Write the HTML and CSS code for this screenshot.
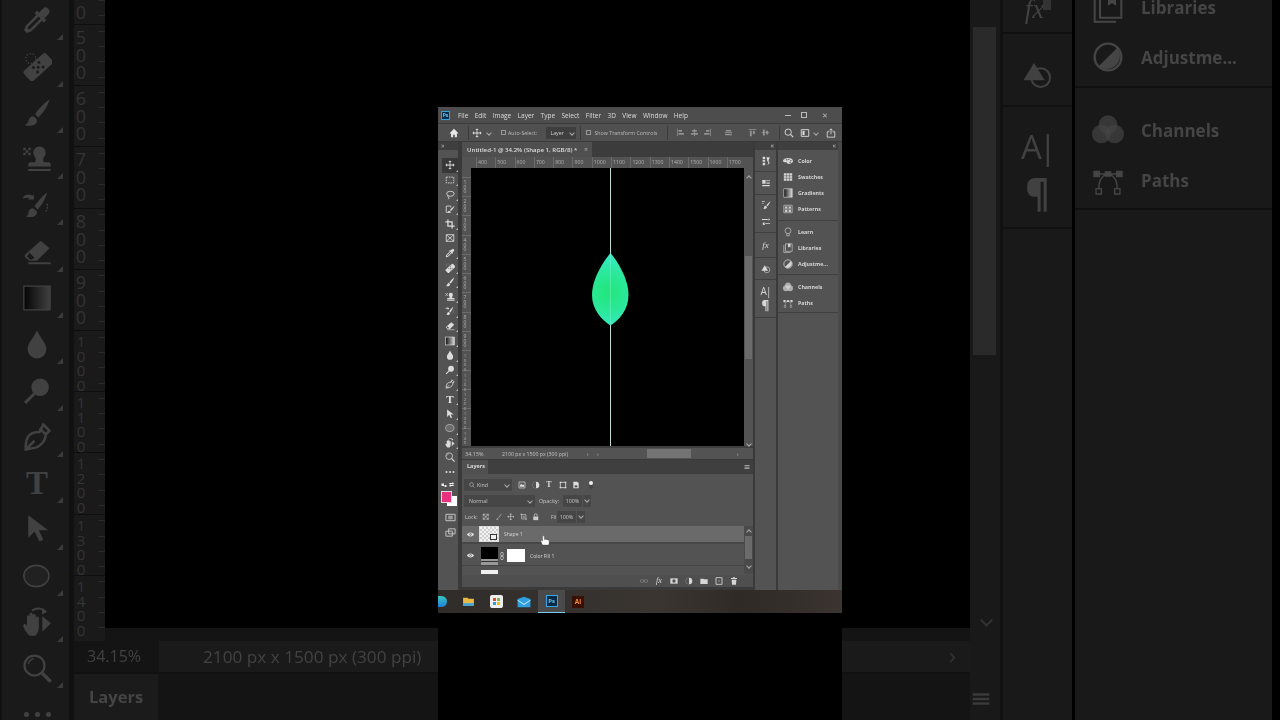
FILE: index.html
```html
<!DOCTYPE html>
<html lang="en">
<head>
<meta charset="utf-8">
<title>Photoshop</title>
<link rel="stylesheet" href="styles.css">
</head>
<body>
<svg class="sprite" aria-hidden="true">
  <defs>
    <linearGradient id="g-grad"><stop offset="0" stop-color="#111"/><stop offset="1" stop-color="#d8d8d8"/></linearGradient>
    <linearGradient id="g-grad-b"><stop offset="0" stop-color="#050505"/><stop offset="1" stop-color="#404040"/></linearGradient>
    <radialGradient id="g-leaf" gradientUnits="userSpaceOnUse" cx="137" cy="124" r="36"><stop offset="0" stop-color="#22e67a"/><stop offset=".55" stop-color="#2be89a"/><stop offset="1" stop-color="#35ebc4"/></radialGradient>
    <symbol id="i-move" viewBox="0 0 24 24"><path fill="currentColor" d="M12 1l4 4h-3v6h6V8l4 4-4 4v-3h-6v6h3l-4 4-4-4h3v-6H5v3l-4-4 4-4v3h6V5H8z"/></symbol>
    <symbol id="i-marquee" viewBox="0 0 24 24"><rect x="3" y="5" width="18" height="14" fill="none" stroke="currentColor" stroke-width="2" stroke-dasharray="4 2"/></symbol>
    <symbol id="i-lasso" viewBox="0 0 24 24"><ellipse cx="13" cy="9" rx="9" ry="6" fill="none" stroke="currentColor" stroke-width="2"/><path d="M8 14c-2 2-1 4 1 4s1 3-2 4" fill="none" stroke="currentColor" stroke-width="2"/></symbol>
    <symbol id="i-quick" viewBox="0 0 24 24"><path d="M3 5h11v3M3 5v15h11" fill="none" stroke="currentColor" stroke-width="2"/><path fill="currentColor" d="M23 5c-4 2-9 7-11 10l2 2c3-2 7-7 9-12zM10 16c-2 0-3 2-3 5 3 0 6-1 6-3z"/></symbol>
    <symbol id="i-crop" viewBox="0 0 24 24"><path d="M7 1v16h16M1 7h16v16" fill="none" stroke="currentColor" stroke-width="3"/></symbol>
    <symbol id="i-frame" viewBox="0 0 24 24"><path d="M3 4h18v16H3zM3 4l18 16M21 4L3 20" fill="none" stroke="currentColor" stroke-width="2"/></symbol>
    <symbol id="i-dropper" viewBox="0 0 24 24"><path fill="currentColor" d="M21 3a3 3 0 0 0-4.300 0l-3 3L12 4.500l-2 2L11.500 8l-8 8c-.8.800-1 1.500-1 2.500L1.500 20 4 22.500l1.500-1c1 0 1.700-.2 2.500-1l8-8 1.500 1.500 2-2-1.500-1.500 3-3A3 3 0 0 0 21 3zM6.800 18.800c-.5.500-1 .6-1.600.6l-.6-.6c0-.6.100-1.100.6-1.600l8-8 1.600 1.600z"/></symbol>
    <symbol id="i-heal" viewBox="0 0 24 24"><g transform="rotate(-42 13 13)"><rect x="1" y="7.500" width="24" height="11" rx="2" fill="currentColor"/><g fill="var(--ib)"><rect x="9" y="9.500" width="2" height="2"/><rect x="15" y="9.500" width="2" height="2"/><rect x="12" y="12" width="2" height="2"/><rect x="9" y="14.500" width="2" height="2"/><rect x="15" y="14.500" width="2" height="2"/></g></g><ellipse cx="7" cy="6" rx="4" ry="4" fill="none" stroke="currentColor" stroke-dasharray="1 1.500"/></symbol>
    <symbol id="i-brush" viewBox="0 0 24 24"><path fill="currentColor" d="M22 1C18 4 13 9 10.500 13l2.500 2.500C16.500 12.500 20.500 7 22 1zM9 14.500c-3 .5-3.500 2.500-4 4.500-.3 1.300-1.500 2.300-3 2.500 4 1.500 9.500.5 10-3 .2-1.500-1-3.200-3-4z"/></symbol>
    <symbol id="i-stamp" viewBox="0 0 24 24"><path fill="currentColor" d="M14 2a5 5 0 0 0-3.500 8.500c.7 1 .7 2.500 0 4H7a2 2 0 0 0-2 2V18h18v-1.500a2 2 0 0 0-2-2h-3.500c-.7-1.500-.7-3 0-4A5 5 0 0 0 14 2zM5 20h18v1.600H5zM1 3h2v2H1zM5 3h2v2H5zM3 5h2v2H3zM1 7h2v2H1zM5 7h2v2H5z"/></symbol>
    <symbol id="i-history" viewBox="0 0 24 24"><path fill="currentColor" d="M20 2c-4 3-8 8-10 11l2.500 2.500C15.500 12.500 19 7 20 2zM8.500 14.500C5.500 15 5.500 17 5 19c-.3 1.300-1 2-2 2.300 4 1 8.500 0 9-3 .2-1.500-1.500-3-3.500-3.800zM1 5.500C3 3.500 6 3 8 4.500l1.500-1v4h-5l1.500-1C4.500 6 3 6 1 7z"/><path d="M20 11a6 6 0 0 1-1 6" fill="none" stroke="currentColor" stroke-dasharray="1.500 1"/></symbol>
    <symbol id="i-eraser" viewBox="0 0 24 24"><path fill="currentColor" d="M15 3L3 13.500a2 2 0 0 0 0 3L6 19h6l10-10z"/><path fill="var(--ib)" d="M6 12.500l4 4-2 1.500H6.500l-2.500-2.500z"/><path d="M5 21h18" stroke="currentColor" stroke-width="1.500"/></symbol>
    <symbol id="i-gradient" viewBox="0 0 24 24"><rect x="1.500" y="2.500" width="21" height="19" fill="url(#g-grad)" stroke="currentColor" stroke-width="1.500"/></symbol>
    <symbol id="i-gradient-b" viewBox="0 0 24 24"><rect x="1.500" y="2.500" width="21" height="19" fill="url(#g-grad-b)" stroke="currentColor" stroke-width="1"/></symbol>
    <symbol id="i-drop" viewBox="0 0 24 24"><path fill="currentColor" d="M12 1C9 8 4.500 11 4.500 16a7.500 7.500 0 0 0 15 0C19.500 11 15 8 12 1z"/></symbol>
    <symbol id="i-dodge" viewBox="0 0 24 24"><circle cx="14.500" cy="9" r="7" fill="currentColor"/><path d="M10 14L2.500 21.500" stroke="currentColor" stroke-width="2.500"/></symbol>
    <symbol id="i-pen" viewBox="0 0 24 24"><path fill="none" stroke="currentColor" stroke-width="2" d="M17 2l5 5-3 3c0 5-4 9-8 10.500L3 22c-.5-3 .5-8 2-10.500 2-3 5-3.500 9-3.500zM14 5l5 5M3 22l7-7"/></symbol>
    <symbol id="i-arrow" viewBox="0 0 24 24"><path fill="currentColor" d="M5 1v18l5-5 4 8 3-1.500-3.500-7.500H21z"/></symbol>
    <symbol id="i-ellipse" viewBox="0 0 24 24"><ellipse cx="11.500" cy="12" rx="10" ry="8.500" fill="currentColor" fill-opacity=".18" stroke="currentColor" stroke-width="1.300"/></symbol>
    <symbol id="i-hand" viewBox="0 0 24 24"><path fill="currentColor" d="M6 23c-2-2-5-6-5-8s2-1.500 3 0V8c0-2 2-2 2 0V6c0-2 2.500-2 2.500 0v1c0-2 2.500-2 2.500 0v2c0-1.500 2.500-1.500 2.500 0v7c0 3-1 5.500-3 7z"/><path d="M8 3c4-3 9-2 11 1M17 9l5 4-5 5z" fill="none" stroke="currentColor" stroke-width="1.500"/><path d="M17 9l5 4-5 5zM16 1l4 3-4 2z" fill="currentColor"/></symbol>
    <symbol id="i-zoom" viewBox="0 0 24 24"><circle cx="10" cy="10" r="8" fill="none" stroke="currentColor" stroke-width="1.800"/><path d="M15.500 15.500L23 23" stroke="currentColor" stroke-width="2.800"/><path d="M5 9c.5-2.500 2-4 4.500-4.500" fill="none" stroke="currentColor"/></symbol>
    <symbol id="i-swap" viewBox="0 0 24 24"><path fill="currentColor" d="M2 2h10v10H2zM14 8h8v8h-8z"/></symbol>
    <symbol id="i-mask" viewBox="0 0 24 24"><path d="M2 5h20v14H2z" fill="none" stroke="currentColor" stroke-width="2"/><rect x="7" y="8" width="10" height="8" fill="currentColor" opacity=".6"/></symbol>
    <symbol id="i-screen" viewBox="0 0 24 24"><path d="M8 4h14v11H8zM2 9h14v11H2z" fill="var(--ib)" stroke="currentColor" stroke-width="2"/></symbol>
    <symbol id="i-home" viewBox="0 0 24 24"><path fill="currentColor" d="M12 2L1 13h4v9h5v-6h4v6h5v-9h4z"/></symbol>
    <symbol id="i-alignl" viewBox="0 0 24 24"><path fill="currentColor" d="M3 2h2v20H3zM7 5h9v5H7zM7 13h14v5H7z" opacity=".75"/></symbol>
    <symbol id="i-alignc" viewBox="0 0 24 24"><path fill="currentColor" d="M11 2h2v20h-2zM6 5h12v5H6zM3 13h18v5H3z" opacity=".75"/></symbol>
    <symbol id="i-alignr" viewBox="0 0 24 24"><path fill="currentColor" d="M19 2h2v20h-2zM8 5h9v5H8zM3 13h14v5H3z" opacity=".75"/></symbol>
    <symbol id="i-alignd" viewBox="0 0 24 24"><path fill="currentColor" d="M2 11h20v2H2zM5 5h14v4H5zM3 15h18v4H3z" opacity=".75"/></symbol>
    <symbol id="i-alignt" viewBox="0 0 24 24"><path fill="currentColor" d="M2 3h20v2H2zM5 7h5v15H5zM13 7h5v9h-5z" opacity=".75"/></symbol>
    <symbol id="i-alignm" viewBox="0 0 24 24"><path fill="currentColor" d="M2 11h20v2H2zM5 4h5v16H5zM14 7h5v10h-5z" opacity=".75"/></symbol>
    <symbol id="i-search" viewBox="0 0 24 24"><circle cx="10" cy="10" r="7.500" fill="none" stroke="currentColor" stroke-width="2.200"/><path d="M15.500 15.500L22 22" stroke="currentColor" stroke-width="2.500"/></symbol>
    <symbol id="i-view" viewBox="0 0 24 24"><path d="M3 4h18v16H3z" fill="none" stroke="currentColor" stroke-width="2.200"/><path d="M6 7h5v10H6z" fill="currentColor"/></symbol>
    <symbol id="i-share" viewBox="0 0 24 24"><path d="M8 9H3v13h18V9h-5" fill="none" stroke="currentColor" stroke-width="2"/><path d="M12 15V2M8 6l4-4 4 4" fill="none" stroke="currentColor" stroke-width="2"/></symbol>
    <symbol id="i-color" viewBox="0 0 24 24"><path fill="currentColor" d="M13 5c6 0 11 3 11 7s-5 7-11 7c-2 0-3-1-3-2s-2-2-4-2-6 0-6-3c0-4 7-7 13-7z"/><g fill="var(--ib)"><circle cx="9" cy="9" r="1.700"/><circle cx="14" cy="8" r="1.700"/><circle cx="19" cy="11" r="1.700"/><circle cx="17" cy="15" r="1.700"/></g></symbol>
    <symbol id="i-swatches" viewBox="0 0 24 24"><path fill="currentColor" d="M2 3h20v18H2z"/><path stroke="var(--ib)" stroke-width="1.200" d="M2 9h20M2 15h20M8.500 3v18M15.500 3v18"/></symbol>
    <symbol id="i-gradients" viewBox="0 0 24 24"><rect x="2" y="2" width="20" height="20" fill="url(#g-grad)" stroke="currentColor" stroke-width="1.500"/></symbol>
    <symbol id="i-patterns" viewBox="0 0 24 24"><path d="M2 3h20v18H2z" fill="none" stroke="currentColor" stroke-width="1.500"/><path d="M5 6h5v5H5zM14 6h5v5h-5zM5 14h5v5H5zM14 14h5v5h-5z" fill="currentColor"/><path d="M12 3v18M2 12h20" stroke="currentColor"/></symbol>
    <symbol id="i-learn" viewBox="0 0 24 24"><circle cx="12" cy="9" r="7" fill="none" stroke="currentColor" stroke-width="1.500"/><path d="M9 16v5h6v-5" fill="none" stroke="currentColor" stroke-width="1.500"/></symbol>
    <symbol id="i-lib" viewBox="0 0 24 24"><path d="M6 2h16v18H6zM2 5v18h16" fill="none" stroke="currentColor" stroke-width="1.500"/><path fill="currentColor" d="M12 2h6v9l-3-2-3 2z"/></symbol>
    <symbol id="i-adjust" viewBox="0 0 24 24"><circle cx="12" cy="12" r="10" fill="none" stroke="currentColor" stroke-width="1.800"/><path fill="currentColor" d="M19 5a10 10 0 0 1-14 14z"/></symbol>
    <symbol id="i-channels" viewBox="0 0 24 24"><g fill="currentColor" fill-opacity=".7"><circle cx="12" cy="8" r="7"/><circle cx="7" cy="15" r="7"/><circle cx="17" cy="15" r="7"/></g></symbol>
    <symbol id="i-paths" viewBox="0 0 24 24"><path d="M1 5h5v5H1zM9.500 5.500h5v4h-5zM18 5h5v5h-5z" fill="currentColor"/><path d="M6 7.500h12M10 8c-4 2-5 6-5 11M14 8c4 2 5 6 5 11" fill="none" stroke="currentColor"/><path d="M3 18.500h4v4H3zM17 18.500h4v4h-4z" fill="none" stroke="currentColor"/></symbol>
    <symbol id="i-glyph" viewBox="0 0 24 24"><path fill="currentColor" d="M4 2h6v5H4zM4 9h6v5H4zM4 16h6v6H4zM13 3h8l-3 9 3 5-6 5 3-6-3-4z"/></symbol>
    <symbol id="i-prop" viewBox="0 0 24 24"><path fill="currentColor" d="M3 5h8v9H3zM13 5h3v3h-3zM18 5h3v3h-3zM13 11h8v3h-8zM3 17h18v2.500H3z"/></symbol>
    <symbol id="i-bset" viewBox="0 0 24 24"><path fill="currentColor" d="M23 3c-4 3-8 7-10 10l2.500 2C18 12 21 8 23 3zM11 14c-3 0-3.500 3-4 5-.3 1-1 1.500-2 2 4 1 8.500 0 9-3 .2-1.500-1-3-3-4zM2 3h7v1.500H2zM2 7h5v1.500H2z"/></symbol>
    <symbol id="i-slide" viewBox="0 0 24 24"><path fill="currentColor" d="M2 5h14v2H2zM18 3l4 3-4 3zM8 15h14v2H8zM4 16a3 3 0 1 0 6 0 3 3 0 0 0-6 0z"/></symbol>
    <symbol id="i-hist" viewBox="0 0 24 24"><path fill="currentColor" d="M9 3l8 13H1z"/><circle cx="14" cy="14" r="7" fill="none" stroke="currentColor" stroke-width="1.500"/></symbol>
    <symbol id="i-eye" viewBox="0 0 24 24"><path fill="currentColor" d="M12 5C6 5 2 9 0 12c2 3 6 7 12 7s10-4 12-7c-2-3-6-7-12-7z"/><circle cx="12" cy="12" r="4" fill="var(--ib)"/><circle cx="12" cy="12" r="2" fill="currentColor"/></symbol>
    <symbol id="i-pixel" viewBox="0 0 24 24"><path d="M3 3h18v18H3z" fill="none" stroke="currentColor" stroke-width="2"/><path d="M6 13l4-5 4 4 2-2 3 4v3H6z" fill="currentColor"/></symbol>
    <symbol id="i-half" viewBox="0 0 24 24"><circle cx="12" cy="12" r="10" fill="currentColor"/><path fill="var(--ib)" d="M12 2v20a10 10 0 0 1 0-20z"/></symbol>
    <symbol id="i-shape" viewBox="0 0 24 24"><path d="M4 4h16v16H4z" fill="none" stroke="currentColor" stroke-width="2.500"/><path d="M2 2h4v4H2zM18 2h4v4h-4zM2 18h4v4H2zM18 18h4v4h-4z" fill="currentColor"/></symbol>
    <symbol id="i-smart" viewBox="0 0 24 24"><path fill="currentColor" d="M4 2h12l4 4v16H4z"/><path fill="var(--ib)" d="M8 13h8v6H8z"/></symbol>
    <symbol id="i-lockt" viewBox="0 0 24 24"><path d="M3 3h18v18H3z" fill="none" stroke="currentColor"/><path fill="currentColor" opacity=".7" d="M3 3h6v6H3zM15 3h6v6h-6zM9 9h6v6H9zM3 15h6v6H3zM15 15h6v6h-6z"/></symbol>
    <symbol id="i-lockb" viewBox="0 0 24 24"><path fill="currentColor" opacity=".6" d="M22 1C18 4 13 10 10 14l2 2c3-3 8-9 10-15zM8 15c-3 1-2 5-5 7 4 1 8 0 8-3 0-1-1-3-3-4z"/></symbol>
    <symbol id="i-art" viewBox="0 0 24 24"><path d="M5 1v18h18M1 5h18v18" fill="none" stroke="currentColor" stroke-width="2"/><path d="M8 8h8v8H8z" fill="currentColor" opacity=".4"/></symbol>
    <symbol id="i-lock" viewBox="0 0 24 24"><path fill="currentColor" d="M4 11h16v12H4z"/><path d="M7.500 11V7a4.500 4.500 0 0 1 9 0v4" fill="none" stroke="currentColor" stroke-width="2.500"/></symbol>
    <symbol id="i-chain" viewBox="0 0 24 24"><rect x="1" y="8" width="11" height="8" rx="4" fill="none" stroke="currentColor" stroke-width="2"/><rect x="12" y="8" width="11" height="8" rx="4" fill="none" stroke="currentColor" stroke-width="2"/></symbol>
    <symbol id="i-vchain" viewBox="0 0 12 24"><rect x="2" y="1" width="8" height="11" rx="4" fill="none" stroke="currentColor" stroke-width="2"/><rect x="2" y="12" width="8" height="11" rx="4" fill="none" stroke="currentColor" stroke-width="2"/></symbol>
    <symbol id="i-lmask" viewBox="0 0 24 24"><path fill="currentColor" d="M1 4h22v16H1z"/><circle cx="12" cy="12" r="5" fill="var(--ib)"/></symbol>
    <symbol id="i-folder" viewBox="0 0 24 24"><path fill="currentColor" d="M1 5h9l2 2h11v14H1z"/></symbol>
    <symbol id="i-new" viewBox="0 0 24 24"><path d="M3 2h18v20H3z" fill="none" stroke="currentColor" stroke-width="2.500"/><path d="M9 11h6v2H9z" fill="currentColor"/></symbol>
    <symbol id="i-trash" viewBox="0 0 24 24"><path fill="currentColor" d="M9 1h6v2h6v3H3V3h6zM5 8h14l-1 15H6z"/></symbol>
    <symbol id="i-menu" viewBox="0 0 24 24"><path fill="currentColor" d="M2 5h20v3H2zM2 10.500h20v3H2zM2 16h20v3H2z"/></symbol>
  </defs>
</svg>

<main class="stage">
  <section class="side side-left">
    <div class="bt">
      <div class="bt-item"><svg class="bi"><use href="#i-dropper"/></svg></div>
      <div class="bt-item"><svg class="bi"><use href="#i-heal"/></svg></div>
      <div class="bt-item"><svg class="bi"><use href="#i-brush"/></svg></div>
      <div class="bt-item"><svg class="bi"><use href="#i-stamp"/></svg></div>
      <div class="bt-item"><svg class="bi"><use href="#i-history"/></svg></div>
      <div class="bt-item"><svg class="bi"><use href="#i-eraser"/></svg></div>
      <div class="bt-item"><svg class="bi"><use href="#i-gradient-b"/></svg></div>
      <div class="bt-item"><svg class="bi"><use href="#i-drop"/></svg></div>
      <div class="bt-item"><svg class="bi"><use href="#i-dodge"/></svg></div>
      <div class="bt-item"><svg class="bi"><use href="#i-pen"/></svg></div>
      <div class="bt-item"><span class="bt-t">T</span></div>
      <div class="bt-item"><svg class="bi"><use href="#i-arrow"/></svg></div>
      <div class="bt-item"><svg class="bi"><use href="#i-ellipse"/></svg></div>
      <div class="bt-item"><svg class="bi"><use href="#i-hand"/></svg></div>
      <div class="bt-item"><svg class="bi"><use href="#i-zoom"/></svg></div>
      <div class="bt-item bt-plain"><span class="bt-dots"></span></div>
    </div>
    <div class="bm">
      <div class="bm-row">
        <div class="bv">
          <div class="bv-s bv-first"><span>0</span></div>
          <div class="bv-s"><span>500</span></div>
          <div class="bv-s"><span>600</span></div>
          <div class="bv-s"><span>700</span></div>
          <div class="bv-s"><span>800</span></div>
          <div class="bv-s"><span>900</span></div>
          <div class="bv-s bv-4"><span>1000</span></div>
          <div class="bv-s bv-4"><span>1100</span></div>
          <div class="bv-s bv-4"><span>1200</span></div>
          <div class="bv-s bv-4"><span>1300</span></div>
          <div class="bv-s bv-4"><span>1400</span></div>
        </div>
        <div class="bc"><div class="bc-black"></div><div class="bc-strip"></div></div>
      </div>
      <div class="b-status">
        <span class="bs-zoom">34.15%</span>
        <span class="bs-size">2100 px x 1500 px (300 ppi)</span>
      </div>
      <div class="b-layers"><span class="bl-tab">Layers</span></div>
    </div>
  </section>

  <section class="center">
    <div class="win">
      <header class="title">
        <span class="ps-logo">Ps</span>
        <nav class="menu"><span>File</span><span>Edit</span><span>Image</span><span>Layer</span><span>Type</span><span>Select</span><span>Filter</span><span>3D</span><span>View</span><span>Window</span><span>Help</span></nav>
        <div class="wctl"><span class="wc-min"></span><span class="wc-max"></span><span class="wc-x">✕</span></div>
      </header>
      <div class="options">
        <svg class="o-home"><use href="#i-home"/></svg>
        <i class="o-sep o-sep1"></i>
        <svg class="o-move"><use href="#i-move"/></svg>
        <span class="chev o-ch"></span>
        <span class="cbox o-cb1"></span><span class="o-lab">Auto-Select:</span>
        <span class="o-sel">Layer<span class="chev"></span></span>
        <i class="o-sep o-sep2"></i>
        <span class="cbox o-cb2"></span><span class="o-lab o-lab2">Show Transform Controls</span>
        <i class="o-sep o-sep3"></i>
        <div class="o-aligns">
          <svg><use href="#i-alignl"/></svg><svg><use href="#i-alignc"/></svg><svg><use href="#i-alignr"/></svg><svg class="o-gap"><use href="#i-alignd"/></svg><svg class="o-gap2"><use href="#i-alignt"/></svg><svg><use href="#i-alignm"/></svg>
        </div>
        <i class="o-sep o-sep4"></i>
        <svg class="o-ic o-search"><use href="#i-search"/></svg>
        <svg class="o-ic o-view"><use href="#i-view"/></svg>
        <span class="chev o-ch2"></span>
        <svg class="o-ic o-share"><use href="#i-share"/></svg>
      </div>
      <div class="wbody">
        <aside class="tools">
          <div class="t-head">»</div>
          <div class="t-list">
            <div class="t t-on"><svg><use href="#i-move"/></svg></div>
            <div class="t"><svg><use href="#i-marquee"/></svg></div>
            <div class="t"><svg><use href="#i-lasso"/></svg></div>
            <div class="t"><svg><use href="#i-quick"/></svg></div>
            <div class="t"><svg><use href="#i-crop"/></svg></div>
            <div class="t t-np"><svg><use href="#i-frame"/></svg></div>
            <div class="t"><svg><use href="#i-dropper"/></svg></div>
            <div class="t"><svg><use href="#i-heal"/></svg></div>
            <div class="t"><svg><use href="#i-brush"/></svg></div>
            <div class="t"><svg><use href="#i-stamp"/></svg></div>
            <div class="t"><svg><use href="#i-history"/></svg></div>
            <div class="t"><svg><use href="#i-eraser"/></svg></div>
            <div class="t"><svg><use href="#i-gradient"/></svg></div>
            <div class="t"><svg><use href="#i-drop"/></svg></div>
            <div class="t"><svg><use href="#i-dodge"/></svg></div>
            <div class="t"><svg><use href="#i-pen"/></svg></div>
            <div class="t"><span class="t-t">T</span></div>
            <div class="t"><svg><use href="#i-arrow"/></svg></div>
            <div class="t"><svg><use href="#i-ellipse"/></svg></div>
            <div class="t"><svg><use href="#i-hand"/></svg></div>
            <div class="t t-np"><svg><use href="#i-zoom"/></svg></div>
            <div class="t t-np"><span class="t-dots"></span></div>
          </div>
          <div class="t-colors">
            <svg class="tc-mini"><use href="#i-swap"/></svg>
            <span class="tc-arrows">⇄</span>
            <span class="tc-bg"></span>
            <span class="tc-fg"></span>
          </div>
          <svg class="t-bottom"><use href="#i-mask"/></svg>
          <svg class="t-bottom"><use href="#i-screen"/></svg>
        </aside>

        <div class="doc">
          <div class="tabs"><div class="tab"><span>Untitled-1 @ 34.2% (Shape 1, RGB/8) *</span><b>×</b></div></div>
          <div class="hr">
            <span class="hr-lead"></span>
            <span>400</span><span>500</span><span>600</span><span>700</span><span>800</span><span>900</span><span>1000</span><span>1100</span><span>1200</span><span>1300</span><span>1400</span><span>1500</span><span>1600</span><span>1700</span>
          </div>
          <div class="cv-row">
            <div class="vr">
              <div class="vr-lead"></div>
              <div class="vr-s"><span>100</span></div>
              <div class="vr-s"><span>200</span></div>
              <div class="vr-s"><span>300</span></div>
              <div class="vr-s"><span>400</span></div>
              <div class="vr-s"><span>500</span></div>
              <div class="vr-s"><span>600</span></div>
              <div class="vr-s"><span>700</span></div>
              <div class="vr-s"><span>800</span></div>
              <div class="vr-s"><span>900</span></div>
              <div class="vr-s vr-4"><span>1000</span></div>
              <div class="vr-s vr-4"><span>1100</span></div>
              <div class="vr-s vr-4"><span>1200</span></div>
              <div class="vr-s vr-4"><span>1300</span></div>
              <div class="vr-s vr-4"><span>1400</span></div>
            </div>
            <svg class="canvas" viewBox="0 0 273 278">
              <path d="M139.500 0V278" stroke="#bcd9d3" stroke-width="1"/>
              <path fill="url(#g-leaf)" d="M139.500 85C132 94 121 111 121 127C121 142 131 152 139.500 157.500C148 152 157.500 142 157.500 127C157.500 111 147 94 139.500 85Z"/>
              <path d="M139.500 85V157" stroke="#7ff0d0" stroke-width=".7" opacity=".6"/>
            </svg>
            <div class="vs"><span class="chev chev-up"></span><span class="vs-thumb"></span><span class="chev"></span></div>
          </div>
          <div class="cv-edge"></div>
          <div class="status">
            <span class="st-zoom">34.15%</span>
            <span class="st-size">2100 px x 1500 px (300 ppi)</span>
            <span class="st-a">›</span><span class="st-b">‹</span>
            <span class="st-thumb"></span>
            <span class="st-c">›</span>
          </div>
          <div class="layers">
            <div class="l-head"><span class="l-tab">Layers</span><svg class="l-menu"><use href="#i-menu"/></svg></div>
            <div class="l-row l-r1">
              <span class="l-sel l-kind"><svg class="l-mag"><use href="#i-search"/></svg>Kind<span class="chev"></span></span>
              <svg class="l-f"><use href="#i-pixel"/></svg><svg class="l-f"><use href="#i-half"/></svg><span class="l-ft">T</span><svg class="l-f"><use href="#i-shape"/></svg><svg class="l-f"><use href="#i-smart"/></svg>
              <span class="l-dot"></span>
            </div>
            <div class="l-row l-r2">
              <span class="l-sel l-blend">Normal<span class="chev"></span></span>
              <span class="l-lab l-oplab">Opacity:</span><span class="l-val">100%</span><span class="l-drop"><span class="chev"></span></span>
            </div>
            <div class="l-row l-r3">
              <span class="l-lab">Lock:</span>
              <div class="l-locks"><svg><use href="#i-lockt"/></svg><svg><use href="#i-lockb"/></svg><svg><use href="#i-move"/></svg><svg><use href="#i-art"/></svg><svg><use href="#i-lock"/></svg></div>
              <span class="l-lab l-filllab">Fill:</span><span class="l-val">100%</span><span class="l-drop"><span class="chev"></span></span>
            </div>
            <div class="l-list">
              <div class="l-items">
                <div class="lay lay-on">
                  <svg class="eye"><use href="#i-eye"/></svg>
                  <span class="th-shape"><span class="th-smart"></span></span>
                  <span class="lay-name lay-n1">Shape 1</span>
                </div>
                <div class="lay lay-2">
                  <svg class="eye"><use href="#i-eye"/></svg>
                  <span class="th-fill"></span>
                  <svg class="lay-link"><use href="#i-vchain"/></svg>
                  <span class="th-mask"></span>
                  <span class="lay-name">Color Fill 1</span>
                </div>
                <div class="lay-3"><span class="th-partial"></span></div>
              </div>
              <div class="l-scroll"><span class="chev chev-up"></span><span class="l-thumb"></span><span class="chev"></span></div>
            </div>
            <div class="l-foot">
              <svg class="lf-link"><use href="#i-chain"/></svg>
              <span class="lf-fx">fx</span>
              <svg><use href="#i-lmask"/></svg>
              <svg><use href="#i-half"/></svg>
              <svg><use href="#i-folder"/></svg>
              <svg><use href="#i-new"/></svg>
              <svg><use href="#i-trash"/></svg>
            </div>
            <svg class="cursor" viewBox="0 0 24 24"><path fill="#fff" stroke="#333" stroke-width=".9" d="M6 23L2 14c-.5-2 2-3 4-1V3c0-3 4.500-3 4.500 0v7c1-1.500 3-1.500 4 0 1-1 3-1 4 1 1-1 3.500 0 3.500 2v5c0 2-1 4-2 5z"/></svg>
          </div>
        </div>

        <div class="dock1">
          <div class="d-bar">«</div>
          <div class="d1-g d1-a1"><svg><use href="#i-glyph"/></svg></div>
          <div class="d1-g d1-a2"><svg><use href="#i-prop"/></svg></div>
          <div class="d1-g d1-two"><svg><use href="#i-bset"/></svg><svg><use href="#i-slide"/></svg></div>
          <div class="d1-g d1-fx"><span>fx</span></div>
          <div class="d1-g d1-hist"><svg><use href="#i-hist"/></svg></div>
          <div class="d1-g d1-txt"><span class="d1-a">A|</span><span class="d1-p">¶</span></div>
        </div>
        <div class="dock2">
          <div class="d-bar">«</div>
          <div class="d2-g d2-g1">
            <div class="d2-i"><svg><use href="#i-color"/></svg><span>Color</span></div>
            <div class="d2-i"><svg><use href="#i-swatches"/></svg><span>Swatches</span></div>
            <div class="d2-i"><svg><use href="#i-gradients"/></svg><span>Gradients</span></div>
            <div class="d2-i"><svg><use href="#i-patterns"/></svg><span>Patterns</span></div>
          </div>
          <div class="d2-g d2-g2">
            <div class="d2-i"><svg><use href="#i-learn"/></svg><span>Learn</span></div>
            <div class="d2-i"><svg><use href="#i-lib"/></svg><span>Libraries</span></div>
            <div class="d2-i"><svg><use href="#i-adjust"/></svg><span>Adjustme...</span></div>
          </div>
          <div class="d2-g d2-g3">
            <div class="d2-i"><svg><use href="#i-channels"/></svg><span>Channels</span></div>
            <div class="d2-i"><svg><use href="#i-paths"/></svg><span>Paths</span></div>
          </div>
        </div>
      </div>
      <footer class="taskbar">
        <span class="tb-edge"></span>
        <svg class="tb-ic tb-folder" viewBox="0 0 24 24"><path fill="#e8b93e" d="M2 5h8l2 2h10v13H2z"/><path fill="#3fa5dc" d="M2 15h20v5H2z"/></svg>
        <span class="tb-ic tb-store"><i></i><i></i><i></i><i></i></span>
        <svg class="tb-ic tb-mail" viewBox="0 0 24 24"><path fill="#2f9fe0" d="M1 7l11-4 11 4v14H1z"/><path fill="#bfe6fa" d="M1 8l11 7 11-7v2l-11 7L1 10z"/></svg>
        <span class="tb-ps"><span>Ps</span></span>
        <span class="tb-ai">Ai</span>
      </footer>
    </div>
  </section>

  <section class="side side-right">
    <div class="rc">
      <div class="rc-black"></div>
      <div class="bc-strip"></div>
      <div class="r-status"><span class="chev-big">›</span></div>
      <div class="r-layers"></div>
    </div>
    <div class="rs">
      <span class="rs-thumb"></span>
      <span class="rs-arrow"></span>
      <svg class="rs-menu"><use href="#i-menu"/></svg>
    </div>
    <div class="rd1">
      <div class="rd1-g rd1-fx"><span class="fx-big">fx</span></div>
      <div class="rd1-g rd1-hist"><svg><use href="#i-hist"/></svg></div>
      <div class="rd1-g rd1-txt"><span class="r-a">A|</span><span class="r-p">¶</span></div>
    </div>
    <div class="rd2">
      <div class="rd2-g rd2-a">
        <div class="rd2-i"><svg><use href="#i-lib"/></svg><span>Libraries</span></div>
        <div class="rd2-i"><svg><use href="#i-adjust"/></svg><span>Adjustme...</span></div>
      </div>
      <div class="rd2-g rd2-b">
        <div class="rd2-i"><svg><use href="#i-channels"/></svg><span>Channels</span></div>
        <div class="rd2-i"><svg><use href="#i-paths"/></svg><span>Paths</span></div>
      </div>
    </div>
  </section>
</main>
</body>
</html>
```

FILE: styles.css
```css
* { box-sizing: border-box; }
html, body { margin: 0; height: 100%; background: #000; overflow: hidden; }
body { font-family: "Open Sans", "Liberation Sans", sans-serif; }
svg { display: block; }
.sprite { position: absolute; width: 0; height: 0; }
.stage { display: flex; width: 1280px; height: 720px; overflow: hidden; }
.side { width: 438px; height: 720px; display: flex; overflow: hidden; filter: blur(.7px); --ib: #191919; }
.center { width: 404px; height: 720px; }

/* large dim background, left */
.bt { width: 74px; padding: 0 0 0 3px; margin-top: -3px; border-left: 2px solid #111; background: #1a1a1a; border-right: 5px solid #111; color: #414141; flex: none; }
.bt-item { height: 46.300px; display: flex; align-items: center; justify-content: center; position: relative; }
.bt-item::after { content: ""; position: absolute; right: 6px; bottom: 3px; border-left: 6px solid transparent; border-bottom: 6px solid #3a3a3a; }
.bt-plain::after { display: none; }
.bi { width: 30px; height: 30px; }
.bt-t { font: 700 33px/1 "Liberation Serif", serif; color: #414141; }
.bt-dots { width: 5px; height: 5px; border-radius: 50%; background: #414141; box-shadow: -11px 0 #414141, 11px 0 #414141; }
.bm { flex: 1; display: flex; flex-direction: column; min-width: 0; }
.bm-row { height: 641px; display: flex; }
.bv { width: 31px; background: #1a1a1a repeating-linear-gradient(#2a2a2a 0 1px, transparent 1px 15.300px) right top / 7px 100% no-repeat; overflow: hidden; color: #343434; flex: none; }
.bv-s { height: 61.200px; border-top: 1px solid #0e0e0e; font-size: 18px; line-height: 14px; letter-spacing: -6.500px; }
.bv-first { height: 24px; border: 0; display: flex; align-items: flex-start; }
.bv-s span { display: block; writing-mode: vertical-rl; text-orientation: upright; }
.bv-4 { font-size: 15px; letter-spacing: -5.400px; }
.bc { flex: 1; display: flex; flex-direction: column; }
.bc-black { flex: 1; background: #000; }
.bc-strip { height: 13px; background: #141414; flex: none; }
.b-status { height: 33px; display: flex; align-items: center; background: #1a1a1a; border-bottom: 2px solid #111; color: #424242; }
.bs-zoom { width: 85px; height: 31px; padding-left: 13px; line-height: 30px; font-size: 16px; background: #141414; flex: none; }
.bs-size { margin-left: 44px; font-size: 17.200px; white-space: nowrap; }
.b-layers { flex: 1; background: #141414; display: flex; }
.bl-tab { width: 84px; background: #1b1b1b; color: #454545; font-weight: 700; font-size: 16.500px; line-height: 46px; padding-left: 15px; }

/* large dim background, right */
.rc { width: 128px; display: flex; flex-direction: column; flex: none; }
.rc-black { flex: 1; background: #000; }
.r-status { height: 33px; flex: none; background: #1a1a1a; border-bottom: 2px solid #111; color: #333; display: flex; justify-content: flex-end; padding-right: 14px; }
.chev-big { font-size: 24px; line-height: 28px; }
.r-layers { height: 46px; flex: none; background: #141414; }
.rs { width: 33px; flex: none; background: #191919; position: relative; border-right: 3px solid #111; display: flex; flex-direction: column; align-items: center; }
.rs-thumb { width: 23px; height: 328px; margin: 27px 0 0 -1px; background: #2a2a2a; }
.rs-arrow { width: 9px; height: 9px; margin: 261px 0 0 3px; border: solid #333; border-width: 0 2px 2px 0; transform: rotate(45deg); }
.rs-menu { width: 20px; height: 20px; margin: 64px 0 0 -9px; color: #3a3a3a; }
.rd1 { width: 69px; flex: none; background: #191919; color: #414141; }
.rd1-g { border-bottom: 2px solid #101010; display: flex; flex-direction: column; align-items: center; }
.rd1-fx { height: 34px; justify-content: flex-end; padding: 0 6px 9px 0; position: relative; }
.rd1-fx::after { content: ""; position: absolute; left: 40px; top: 0; width: 8px; height: 10px; background: #333; }
.rd1-hist { height: 73px; justify-content: center; padding-top: 10px; }
.rd1-hist svg { width: 32px; height: 32px; }
.rd1-txt { height: 122px; padding-top: 20px; }
.fx-big { font: italic 27px/1 "Liberation Serif", serif; color: #414141; }
.r-a { font-size: 33px; line-height: 40px; letter-spacing: -3px; }
.r-p { font-size: 38px; line-height: 50px; font-weight: 700; }
.rd2 { width: 197px; margin-left: 3px; flex: none; background: #191919; }
.rd2-g { border-bottom: 2px solid #101010; }
.rd2-a { margin-top: -18px; height: 106px; }
.rd2-b { height: 122px; padding-top: 17px; }
.rd2-i { height: 50px; display: flex; align-items: center; color: #454545; font-weight: 700; font-size: 17px; padding-left: 15px; gap: 15px; }
.rd2-i svg { width: 36px; height: 32px; flex: none; }

/* sharp window */
.win { width: 404px; height: 506px; margin-top: 107px; display: flex; flex-direction: column; background: #3a3a3a; color: #d0d0d0; font-size: 6px; --ib: #535353; filter: blur(.3px); }
.title { height: 16px; margin-bottom: 1px; display: flex; align-items: center; background: #4d4d4d; flex: none; position: relative; }
.ps-logo { width: 9px; height: 9px; margin-left: 3px; background: #0b2a45; border: 1px solid #2fa3e6; color: #6cc5f5; font-size: 5px; line-height: 7px; font-weight: 700; text-align: center; flex: none; }
.menu { display: flex; margin-left: 8px; font-size: 6.500px; color: #ddd; gap: 6.400px; }
.wctl { display: flex; align-items: center; margin-left: auto; margin-right: 14px; gap: 10px; color: #bbb; }
.wc-min { width: 6px; height: 1px; background: #bbb; }
.wc-max { width: 6px; height: 6px; border: 1px solid #bbb; }
.wc-x { font-size: 7px; margin-left: 5px; }

.options { height: 17px; margin-bottom: 1px; display: flex; align-items: center; background: #505050; flex: none; color: #ccc; }
.o-home { width: 10px; height: 10px; margin-left: 11px; color: #e8e8e8; flex: none; }
.o-sep { width: 1px; height: 14px; background: #3c3c3c; flex: none; }
.o-sep1 { margin-left: 9px; }
.o-move { width: 10px; height: 10px; margin-left: 3px; color: #ddd; flex: none; }
.chev { display: inline-block; width: 4px; height: 4px; border: solid #aaa; border-width: 0 1px 1px 0; transform: rotate(45deg); flex: none; }
.chev-up { transform: rotate(225deg); }
.o-ch { margin-left: 5px; }
.cbox { width: 5px; height: 5px; border: 1px solid #999; flex: none; }
.o-cb1 { margin-left: 10px; }
.o-lab { margin-left: 2px; font-size: 5.300px; color: #bbb; white-space: nowrap; flex: none; }
.o-sel { width: 30px; height: 12px; margin-left: 9px; background: #3e3e3e; display: flex; align-items: center; padding-left: 4px; font-size: 5.300px; gap: 6px; flex: none; }
.o-sep2 { margin-left: 4px; }
.o-cb2 { margin-left: 5px; }
.o-lab2 { width: 72px; margin-left: 3px; }
.o-sep3 { margin-left: 1px; }
.o-aligns { display: flex; margin-left: 8px; gap: 4.400px; color: #aaa; flex: none; }
.o-aligns svg { width: 9px; height: 9px; }
.o-aligns .o-gap { margin-left: 7px; }
.o-aligns .o-gap2 { margin-left: 11px; }
.o-sep4 { margin-left: 9px; }
.o-ic { width: 10px; height: 10px; color: #ddd; flex: none; }
.o-search { margin-left: 4px; }
.o-view { margin-left: 6px; }
.o-ch2 { margin-left: 4px; }
.o-share { margin-left: 8px; }

.wbody { height: 448px; display: flex; flex: none; background: #3a3a3a; }
.tools { width: 20px; background: #535353; flex: none; display: flex; flex-direction: column; align-items: center; margin-right: 4px; color: #dcdcdc; }
.t-head { width: 100%; height: 8px; background: #3f3f3f; font-size: 7px; line-height: 7px; color: #bbb; padding-left: 3px; }
.t-list { width: 100%; margin-top: 8px; }
.t { height: 14.620px; display: flex; align-items: center; justify-content: center; padding-left: 4px; position: relative; }
.t svg { width: 10px; height: 10px; }
.t::after { content: ""; position: absolute; right: 0; bottom: 1px; border-left: 2px solid transparent; border-bottom: 2px solid #bbb; }
.t-np::after { display: none; }
.t-on { background: #383838; margin: 0 0 0 4px; padding-left: 0; }
.t-t { font: 700 11px/1 "Liberation Serif", serif; color: #e6e6e6; }
.t-dots { width: 2px; height: 2px; border-radius: 50%; background: #ddd; box-shadow: -3.500px 0 #ddd, 3.500px 0 #ddd; }
.t-colors { width: 20px; height: 26px; margin-top: 3px; position: relative; flex: none; }
.tc-mini { position: absolute; left: 3px; top: 1px; width: 6px; height: 6px; color: #eee; }
.tc-arrows { position: absolute; left: 11px; top: -1px; font-size: 6px; color: #eee; }
.tc-fg { position: absolute; left: 3px; top: 9px; width: 11px; height: 12px; background: #e9327f; border: 1px solid #ddd; }
.tc-bg { position: absolute; left: 9px; top: 14px; width: 10px; height: 10px; background: #fff; }
.t-bottom { width: 11px; height: 11px; margin: 4px 0 0 4px; color: #ccc; flex: none; }

.doc { width: 291px; flex: none; display: flex; flex-direction: column; height: 445px; }
.tabs { height: 15px; display: flex; background: #3c3c3c; flex: none; }
.tab { width: 130px; background: #4f4f4f; display: flex; align-items: center; justify-content: space-between; padding: 0 4px 0 5px; font-size: 6.100px; font-weight: 600; color: #ddd; white-space: nowrap; }
.tab b { font-weight: 400; font-size: 7px; color: #aaa; }
.hr { height: 11px; display: flex; background: #535353; font-size: 5.200px; line-height: 10px; color: #b0b0b0; flex: none; padding-left: 9px; padding-right: 9px; overflow: hidden; }
.hr-lead { width: 5px; flex: none; }
.hr span:not(.hr-lead) { width: 19.300px; border-left: 1px solid #6b6b6b; padding-left: 1px; flex: none; }
.cv-row { height: 278px; display: flex; flex: none; }
.vr { width: 9px; background: #535353; flex: none; overflow: hidden; color: #b0b0b0; font-size: 5px; line-height: 5px; letter-spacing: -1.300px; }
.vr-lead { height: 8.700px; }
.vr-s { height: 19.300px; padding-top: 1px; border-top: 1px solid #6b6b6b; }
.vr-s span { display: block; writing-mode: vertical-rl; text-orientation: upright; }
.vr-4 { font-size: 4.300px; letter-spacing: -1.350px; }
.canvas { width: 273px; height: 278px; background: #000; flex: none; }
.vs { width: 9px; background: #535353; display: flex; flex-direction: column; align-items: center; flex: none; padding-top: 8px; }
.vs-thumb { width: 7px; height: 103px; margin: 76px 0 83px; background: #6b6b6b; }
.cv-edge { height: 2px; background: #3f3f3f; flex: none; }
.status { height: 11px; margin-bottom: 1px; display: flex; align-items: center; background: #535353; font-size: 5.500px; color: #c4c4c4; flex: none; }
.st-zoom { margin-left: 3px; width: 37px; }
.st-size { width: 85px; font-size: 5.200px; white-space: nowrap; }
.st-a { margin-left: 0; width: 10px; }
.st-b { width: 50px; }
.st-thumb { width: 44px; height: 9px; background: #737373; }
.st-c { margin-left: 46px; }
.layers { height: 127px; position: relative; background: #535353; display: flex; flex-direction: column; flex: none; }
.l-head { height: 14px; display: flex; justify-content: space-between; align-items: center; background: #3f3f3f; padding-right: 3px; flex: none; }
.l-tab { width: 26px; height: 14px; background: #505050; color: #ddd; font-size: 5.500px; font-weight: 700; line-height: 13px; padding-left: 5px; }
.l-menu { width: 6px; height: 6px; color: #bbb; }
.l-row { height: 12px; margin-top: 4px; display: flex; align-items: center; padding-left: 2px; flex: none; color: #c6c6c6; font-size: 5.300px; }
.l-r1 { margin-top: 5px; }
.l-sel { height: 12px; background: #464646; display: flex; align-items: center; justify-content: space-between; padding: 0 3px 0 5px; flex: none; }
.l-mag { width: 6px; height: 6px; margin-right: 2px; flex: none; }
.l-kind { width: 48px; justify-content: flex-start; }
.l-kind .chev { margin-left: auto; }
.l-f { width: 8px; height: 8px; margin-left: 5.500px; color: #ddd; flex: none; }
.l-kind + .l-f { margin-left: 6px; }
.l-ft { width: 8px; margin-left: 5.500px; text-align: center; font: 700 8px/1 "Liberation Serif", serif; color: #ddd; }
.l-dot { width: 4px; height: 4px; margin: -5px 0 0 9px; background: #eee; border-radius: 50%; box-shadow: 0 4px 0 #444; }
.l-blend { width: 71px; }
.l-oplab { margin-left: 4px; width: 24px; }
.l-val { width: 19px; height: 12px; background: #464646; text-align: center; line-height: 12px; flex: none; }
.l-drop { width: 8px; height: 12px; background: #464646; margin-left: 1px; display: flex; justify-content: center; padding-top: 3px; flex: none; }
.l-r3 { padding-left: 3px; }
.l-r3 .l-lab:first-child { width: 17px; }
.l-locks { display: flex; gap: 5px; color: #ccc; flex: none; width: 63px; }
.l-locks svg { width: 7.500px; height: 7.500px; }
.l-filllab { width: 12px; margin-left: 6px; }
.l-r3 .l-val { margin-left: -6px; }
.l-list { display: flex; height: 48px; margin-top: 3px; flex: none; }
.l-items { width: 282px; flex: none; }
.lay { height: 20px; display: flex; align-items: center; border-bottom: 1px solid #434343; position: relative; color: #d6d6d6; font-size: 5px; }
.lay-on { height: 18px; background: #6a6a6a; border-bottom: 2px solid #484848; }
.lay-2 { height: 22px; padding-top: 2px; }
.eye { width: 7px; height: 7px; margin-left: 5px; color: #e6e6e6; flex: none; }
.th-shape { width: 20px; height: 16px; margin-left: 5px; border: 1px solid #ddd; background: repeating-conic-gradient(#cfcfcf 0 25%, #f2f2f2 0 50%) 0 0 / 4px 4px; position: relative; flex: none; }
.th-smart { position: absolute; right: 1px; bottom: 1px; width: 7px; height: 6px; border: 1px solid #333; background: #eee; }
.lay-name { margin-left: 5px; }
.th-fill { width: 17px; height: 18px; margin-left: 7px; background: linear-gradient(#000 0 68%, #999 68% 80%, #333 80% 86%, #999 86%); flex: none; }
.lay-link { width: 4px; height: 8px; margin-left: 2px; color: #ddd; flex: none; }
.th-mask { width: 18px; height: 13px; margin-left: 3px; background: #fff; flex: none; }
.lay-3 { height: 8px; padding: 4px 0 0 19px; }
.th-partial { display: block; width: 17px; height: 4px; background: #f0f0f0; }
.l-scroll { width: 9px; display: flex; flex-direction: column; align-items: center; background: #4a4a4a; padding-top: 4px; }
.l-thumb { width: 7px; height: 23px; margin: 2px 0 5px; background: #6b6b6b; }
.l-foot { height: 12px; margin-top: 1px; display: flex; align-items: center; padding-left: 178px; gap: 7px; background: #4f4f4f; color: #d6d6d6; flex: none; }
.l-foot svg { width: 8px; height: 8px; flex: none; }
.l-foot .lf-link { color: #888; }
.lf-fx { width: 8px; font: italic 8px/1 "Liberation Serif", serif; text-align: center; color: #ddd; }
.cursor { position: absolute; left: 78px; top: 75px; width: 10px; height: 11px; }

.dock1 { width: 21px; margin-left: 2px; background: #535353; flex: none; color: #d8d8d8; --ib: #535353; }
.d-bar { height: 8px; background: #3f3f3f; text-align: right; padding-right: 2px; font-size: 7px; line-height: 7px; color: #c0c0c0; }
.d1-g { display: flex; flex-direction: column; align-items: center; justify-content: center; border-bottom: 1px solid #3f3f3f; }
.d1-g svg { width: 10px; height: 10px; }
.d1-a1 { height: 22px; }
.d1-a2 { height: 23px; }
.d1-two { height: 38px; gap: 7px; }
.d1-fx { height: 25px; font: italic 9px/1 "Liberation Serif", serif; color: #ddd; }
.d1-hist { height: 22px; }
.d1-txt { height: 38px; }
.d1-a { font-size: 10px; line-height: 14px; font-weight: 400; letter-spacing: -1px; }
.d1-p { font-size: 12px; line-height: 16px; font-weight: 700; }
.dock2 { width: 64px; margin-left: 2px; background: #535353; flex: none; border-right: 4px solid #4a4a4a; --ib: #535353; }
.d2-g { border-bottom: 1px solid #3f3f3f; }
.d2-g1 { padding: 3px 0; height: 71px; }
.d2-g2 { padding-top: 3px; height: 54px; }
.d2-g3 { padding-top: 4px; height: 38px; }
.d2-i { height: 16px; display: flex; align-items: center; padding-left: 5px; gap: 5px; color: #d6d6d6; font-size: 5.300px; font-weight: 700; white-space: nowrap; }
.d2-g2 .d2-i:nth-child(3) { height: 15.500px; }
.d2-i svg { width: 10px; height: 10px; flex: none; }

.taskbar { height: 23px; display: flex; align-items: center; background: linear-gradient(90deg, #2f2c2a, #3a3531 55%, #2f2a26 75%, #3b3430); flex: none; position: relative; }
.tb-edge { width: 9px; height: 11px; background: linear-gradient(#39c6c0, #1f7fd6); border-radius: 0 6px 6px 0; flex: none; }
.tb-ic { flex: none; }
.tb-folder { width: 13px; height: 13px; margin-left: 15px; }
.tb-store { width: 13px; height: 13px; margin-left: 15px; display: grid; grid-template: 1fr 1fr / 1fr 1fr; gap: 1px; padding: 3px; background: #eee; border-radius: 2px; }
.tb-store i:nth-child(1) { background: #e64a2e; }
.tb-store i:nth-child(2) { background: #6cc04a; }
.tb-store i:nth-child(3) { background: #2a9fe0; }
.tb-store i:nth-child(4) { background: #f2b90f; }
.tb-mail { width: 14px; height: 14px; margin-left: 14px; }
.tb-ps { width: 27px; height: 23px; margin-left: 7px; background: #4a4a4a; border-bottom: 1px solid #7fc8ef; display: flex; align-items: center; justify-content: center; flex: none; }
.tb-ps span { width: 12px; height: 12px; background: #0b2a45; border: 1px solid #38a6e8; color: #6cc5f5; font-size: 6px; line-height: 10px; font-weight: 700; text-align: center; }
.tb-ai { width: 12px; height: 12px; margin-left: 7px; background: #3a0f06; color: #f08a3a; font-size: 6.500px; line-height: 12px; font-weight: 700; text-align: center; flex: none; }
```
